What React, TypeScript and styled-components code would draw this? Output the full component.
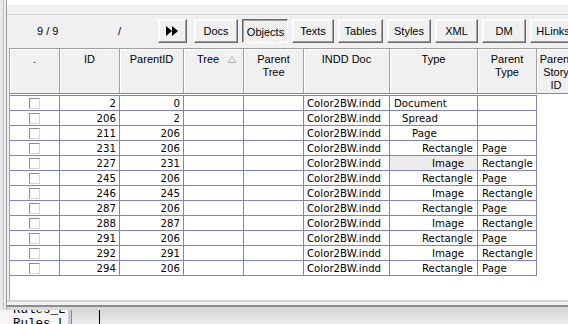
import React from "react";
import styled, { createGlobalStyle } from "styled-components";

const GlobalStyle = createGlobalStyle`
  html, body { margin: 0; padding: 0; }
  body { background: #e8e8e8; font-family: "Liberation Sans", Arial, sans-serif; color: #000; }
  #root { width: 568px; height: 324px; overflow: hidden; }
`;

const COLS = [50, 60, 64, 60, 60, 86, 88, 59];
const HEAD_COLS = [...COLS, 39];
const tpl = (a: number[]) => a.map((w) => `${w}px`).join(" ");

const Screen = styled.div`
  width: 568px;
  height: 324px;
  overflow: hidden;
  display: flex;
  flex-direction: column;
  background: #e8e8e8;
`;

const Desktop = styled.div`
  display: flex;
  height: 310px;
  flex: none;
`;

const LeftEdge = styled.div`
  width: 6px;
  flex: none;
  background: linear-gradient(to right, #e9e9e9 0 3px, #c2c2c2 3px 4px, #ededed 4px 6px);
`;

const Window = styled.div`
  flex: 1;
  min-width: 0;
  display: flex;
  flex-direction: column;
  background: #f0f0f0;
  border-left: 1px solid #9c9c9c;
`;

const TopField = styled.div`
  height: 5px;
  flex: none;
  background: #fff;
`;

const Separator = styled.div`
  margin-top: 9px;
  height: 1px;
  flex: none;
  background: #d5d5d5;
`;

const Toolbar = styled.div`
  height: 33px;
  flex: none;
  box-sizing: border-box;
  padding-top: 4px;
  display: flex;
  align-items: flex-start;
  font-size: 11px;
  overflow: hidden;
`;

const Counter = styled.div`
  width: 111px;
  flex: none;
  box-sizing: border-box;
  padding-left: 30px;
  line-height: 24px;
  white-space: pre;
`;

const Slash = styled.div`
  width: 40px;
  flex: none;
  line-height: 24px;
`;

const Buttons = styled.div`
  display: flex;
  flex: none;
  gap: 4px;
`;

const Btn = styled.div<{ $w: number; $pressed?: boolean }>`
  width: ${(p) => p.$w}px;
  height: 24px;
  box-sizing: border-box;
  display: flex;
  align-items: center;
  justify-content: center;
  font-size: 11px;
  border: 1px solid;
  border-color: ${(p) => (p.$pressed ? "#696969 #fff #fff #696969" : "#fff #696969 #696969 #fff")};
  box-shadow: ${(p) =>
    p.$pressed ? "inset 1px 1px 0 #a0a0a0" : "inset -1px -1px 0 #a0a0a0, inset 1px 1px 0 #f8f8f8"};
  background: ${(p) =>
    p.$pressed ? "repeating-conic-gradient(#ffffff 0 25%, #e2e2e2 0 50%) 0 0 / 2px 2px" : "#f0f0f0"};
  padding-top: ${(p) => (p.$pressed ? "2px" : "0")};
  padding-left: ${(p) => (p.$pressed ? "1px" : "0")};
  flex: none;
`;

const FFWrap = styled.div`
  margin-right: 3px;
  flex: none;
`;

const Grid = styled.div`
  flex: 1;
  min-height: 0;
  margin-left: 2px;
  background: #fff;
  border-left: 1px solid #a0a0a0;
  border-top: 1px solid #a0a0a0;
  overflow: hidden;
  display: flex;
  flex-direction: column;
`;

const HeaderRow = styled.div`
  display: grid;
  grid-template-columns: ${tpl(HEAD_COLS)};
  height: 45px;
  flex: none;
`;

const HeadCell = styled.div<{ $left?: number }>`
  box-sizing: border-box;
  background: #f0f0f0;
  border-right: 1px solid #a0a0a0;
  border-bottom: 1px solid #8a8a8a;
  box-shadow: inset 1px 1px 0 #fff;
  font-size: 11px;
  line-height: 13px;
  padding: 4px 1px 0 ${(p) => (p.$left !== undefined ? `${p.$left}px` : "1px")};
  text-align: ${(p) => (p.$left !== undefined ? "left" : "center")};
  overflow: hidden;
`;

const SortArrow = styled.svg`
  margin-left: 9px;
  vertical-align: 0px;
`;

const Body = styled.div`
  margin-top: 1px;
  width: max-content;
  border-top: 1px solid #8080d0;
  display: grid;
  grid-template-columns: ${tpl(COLS)};
  grid-auto-rows: 15px;
`;

const Cell = styled.div<{ $align?: "left" | "right" | "center"; $indent?: number; $selected?: boolean }>`
  box-sizing: border-box;
  border-right: 1px solid #8080d0;
  border-bottom: 1px solid #8080d0;
  font-family: "DejaVu Sans", Verdana, sans-serif;
  font-size: 10.2px;
  line-height: 14px;
  white-space: nowrap;
  overflow: hidden;
  text-align: ${(p) => p.$align || "left"};
  padding: ${(p) =>
    p.$align === "right"
      ? "1px 3px 0 0"
      : p.$align === "center"
      ? "0"
      : `1px 0 0 ${3 + (p.$indent || 0)}px`};
  background: ${(p) => (p.$selected ? "#ececec" : "#fff")};
  display: ${(p) => (p.$align === "center" ? "flex" : "block")};
  align-items: center;
  justify-content: center;
`;

const CheckBox = styled.div`
  width: 11px;
  height: 11px;
  box-sizing: border-box;
  background: #fff;
  border: 1px solid;
  border-color: #8e8e8e #d6d6d6 #d6d6d6 #8e8e8e;
  margin-left: -1px;
`;

const BottomFrame = styled.div`
  height: 10px;
  flex: none;
  background: linear-gradient(#d2d2d2 0 2px, #f2f2f2 2px 5px, #8c8c8c 5px 7px, #d9d9d9 7px 10px);
`;

const Below = styled.div`
  flex: 1;
  display: flex;
  background: linear-gradient(#d8d8d8, #ececec);
  overflow: hidden;
`;

const TextPane = styled.div`
  width: 68px;
  flex: none;
  background: #f6f6f6;
  font-family: "Liberation Mono", "Courier New", monospace;
  font-size: 12.5px;
  line-height: 14px;
  padding-left: 13px;
  box-sizing: border-box;
  overflow: hidden;
  white-space: pre;
`;

const PaneText = styled.div`
  margin-top: -7px;
`;

const PaneDivider = styled.div`
  width: 3px;
  flex: none;
  background: #c6ccd8;
  border-right: 1px solid #8a8a8a;
`;

const Gap = styled.div`
  width: 27px;
  flex: none;
  border-right: 1px solid #000;
`;

type Row = { id: number; pid: number; type: string; level: number; ptype: string; sel?: boolean };

const rows: Row[] = [
  { id: 2, pid: 0, type: "Document", level: 0, ptype: "" },
  { id: 206, pid: 2, type: "Spread", level: 1, ptype: "" },
  { id: 211, pid: 206, type: "Page", level: 2, ptype: "" },
  { id: 231, pid: 206, type: "Rectangle", level: 3, ptype: "Page" },
  { id: 227, pid: 231, type: "Image", level: 4, ptype: "Rectangle", sel: true },
  { id: 245, pid: 206, type: "Rectangle", level: 3, ptype: "Page" },
  { id: 246, pid: 245, type: "Image", level: 4, ptype: "Rectangle" },
  { id: 287, pid: 206, type: "Rectangle", level: 3, ptype: "Page" },
  { id: 288, pid: 287, type: "Image", level: 4, ptype: "Rectangle" },
  { id: 291, pid: 206, type: "Rectangle", level: 3, ptype: "Page" },
  { id: 292, pid: 291, type: "Image", level: 4, ptype: "Rectangle" },
  { id: 294, pid: 206, type: "Rectangle", level: 3, ptype: "Page" },
];

const INDENT = [1, 9, 19, 29, 39];

const tabs: { label: string; w: number; pressed?: boolean }[] = [
  { label: "Docs", w: 44 },
  { label: "Objects", w: 46, pressed: true },
  { label: "Texts", w: 42 },
  { label: "Tables", w: 45 },
  { label: "Styles", w: 44 },
  { label: "XML", w: 43 },
  { label: "DM", w: 44 },
  { label: "HLinks", w: 46 },
];

export default function App() {
  return (
    <>
      <GlobalStyle />
      <Screen>
        <Desktop>
          <LeftEdge />
          <Window>
            <TopField />
            <Separator />
            <Toolbar>
              <Counter>9 / 9</Counter>
              <Slash>/</Slash>
              <Buttons>
                <FFWrap>
                  <Btn $w={29}>
                    <svg width="13" height="10" viewBox="0 0 13 10">
                      <polygon points="0,0 6,5 0,10" fill="#000" />
                      <polygon points="6,0 12,5 6,10" fill="#000" />
                    </svg>
                  </Btn>
                </FFWrap>
                {tabs.map((t) => (
                  <Btn key={t.label} $w={t.w} $pressed={t.pressed}>
                    {t.label}
                  </Btn>
                ))}
              </Buttons>
            </Toolbar>
            <Grid>
              <HeaderRow>
                <HeadCell>.</HeadCell>
                <HeadCell>ID</HeadCell>
                <HeadCell>ParentID</HeadCell>
                <HeadCell $left={13}>
                  Tree
                  <SortArrow width="8" height="7" viewBox="0 0 8 7">
                    <polygon points="4,0.5 7.5,6.5 0.5,6.5" fill="none" stroke="#b4b4b4" strokeWidth="1" />
                  </SortArrow>
                </HeadCell>
                <HeadCell>
                  Parent
                  <br />
                  Tree
                </HeadCell>
                <HeadCell>INDD Doc</HeadCell>
                <HeadCell>Type</HeadCell>
                <HeadCell>
                  Parent
                  <br />
                  Type
                </HeadCell>
                <HeadCell>
                  Parent
                  <br />
                  Story
                  <br />
                  ID
                </HeadCell>
              </HeaderRow>
              <Body>
                {rows.map((r) => (
                  <React.Fragment key={r.id}>
                    <Cell $align="center">
                      <CheckBox />
                    </Cell>
                    <Cell $align="right">{r.id}</Cell>
                    <Cell $align="right">{r.pid}</Cell>
                    <Cell />
                    <Cell />
                    <Cell>Color2BW.indd</Cell>
                    <Cell $indent={INDENT[r.level]} $selected={r.sel}>
                      {r.type}
                    </Cell>
                    <Cell $indent={1}>{r.ptype}</Cell>
                  </React.Fragment>
                ))}
              </Body>
            </Grid>
            <BottomFrame />
          </Window>
        </Desktop>
        <Below>
          <TextPane>
            <PaneText>{"Rules_L\nRules_L"}</PaneText>
          </TextPane>
          <PaneDivider />
          <Gap />
        </Below>
      </Screen>
    </>
  );
}
